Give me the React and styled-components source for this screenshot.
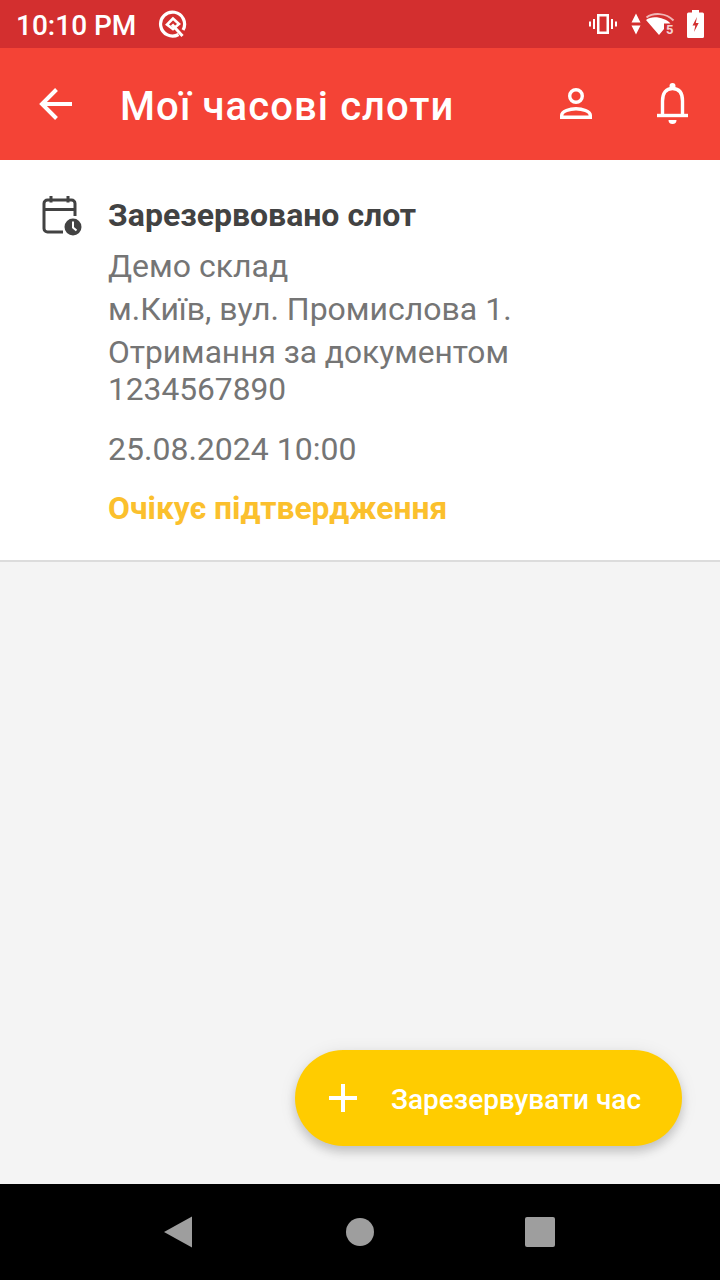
import React from "react";
import styled, { createGlobalStyle } from "styled-components";

const Global = createGlobalStyle`
  html, body { margin: 0; padding: 0; background: #f4f4f4; }
  body { font-family: Roboto, "Noto Sans", sans-serif; }
  * { box-sizing: border-box; }
`;
const Screen = styled.div`
  width: 720px; height: 1280px; display: flex; flex-direction: column; overflow: hidden; background: #f4f4f4;
`;
const StatusBar = styled.div`
  height: 48px; flex: none; background: #d32f2f; color: #fff; display: flex; align-items: center; padding: 0 16px;
`;
const Time = styled.span`
  font-size: 28px; font-weight: 500; line-height: 48px; margin-right: 22px; padding-top: 3px;
`;
const StatusRight = styled.div`
  margin-left: auto; display: flex; align-items: center;
`;
const StatusIcon = styled.svg`
  display: block; flex: none; margin-left: ${p => p.$gap || 0}px;
`;
const AppBar = styled.header`
  height: 112px; flex: none; background: #f44336; color: #fff; display: flex; align-items: center; padding: 0 28px 0 36px;
`;
const Title = styled.h1`
  margin: 0 0 0 44px; padding-top: 4px; font-size: 40px; font-weight: 500; letter-spacing: 1.1px; flex: 1; white-space: nowrap;
`;
const BarIcon = styled.svg`
  display: block; flex: none; margin-left: ${p => p.$gap || 0}px;
`;
const Main = styled.main`
  flex: 1; position: relative; min-height: 0;
`;
const Card = styled.article`
  background: #fff; border-bottom: 2px solid #dcdcdc; height: 402px; display: flex; padding: 34px 0 0 41px;
`;
const CardIcon = styled.svg`
  display: block; flex: none; margin-right: 25px;
`;
const CardBody = styled.div`
  display: flex; flex-direction: column; color: #757575;
`;
const CardTitle = styled.div`
  font-size: 32px; font-weight: 700; line-height: 42px; color: #424242;
`;
const Line = styled.div`
  font-size: 32px; line-height: 43px; margin-top: ${p => p.$mt || 0}px;
`;
const Doc = styled.div`
  font-size: 31.7px; line-height: 37px; margin-top: 3px; width: 440px;
`;
const Status = styled.div`
  font-size: 31.8px; font-weight: 700; line-height: 40px; color: #fbc02d; margin-top: 17px;
`;
const Fab = styled.button`
  position: absolute; left: 295px; top: 890px; width: 387px; height: 96px; border: 0; border-radius: 48px;
  background: #ffcc00; color: #fff; display: flex; align-items: center; padding: 0 0 0 32px;
  box-shadow: 0 6px 10px rgba(0,0,0,.16), 0 2px 18px rgba(0,0,0,.08);
  font-family: Roboto, sans-serif; font-size: 28px; font-weight: 500;
`;
const FabLabel = styled.span`
  margin-left: 32px; padding-top: 2px; white-space: nowrap;
`;
const FabIcon = styled.svg`
  display: block; flex: none;
`;
const NavBar = styled.nav`
  height: 96px; flex: none; background: #000; display: flex; align-items: center; padding-left: 160px;
`;
const NavBack = styled.svg`
  display: block; flex: none;
`;
const NavHome = styled.div`
  width: 28px; height: 28px; border-radius: 50%; background: #9e9e9e; margin-left: 150px;
`;
const NavRecent = styled.div`
  width: 30px; height: 30px; border-radius: 2px; background: #9e9e9e; margin-left: 151px;
`;

export default function App() {
  return (
    <Screen>
      <Global />
      <StatusBar>
        <Time>10:10 PM</Time>
        <StatusIcon width="30" height="30" viewBox="0 0 30 30" fill="none" stroke="#fff">
          <path d="M20.500 25.500A12 12 0 1 1 25 21" strokeWidth="3.200" />
          <path d="M15 9.500 L9 15.500 L15 20 L21 15 Z" strokeWidth="2.600" />
          <path d="M14 15.500 L24.500 27" strokeWidth="3" />
        </StatusIcon>
        <StatusRight>
          <StatusIcon width="28" height="24" viewBox="0 0 28 24" fill="#fff">
            <path fillRule="evenodd" d="M8 2h12v20H8zM10.500 4.500v15h7v-15z" />
            <path d="M4 7h2v10H4zM22 7h2v10h-2zM0 9.500h2v5H0zM26 9.500h2v5h-2z" />
          </StatusIcon>
          <StatusIcon $gap={14} width="10" height="24" viewBox="0 0 10 24" fill="#fff">
            <path d="M5 1.500l4.500 9h-9zM5 22.500l-4.500-9h9z" />
          </StatusIcon>
          <StatusIcon $gap={2} width="32" height="32" viewBox="0 -4 32 32" fill="#fff">
            <path d="M3 8 L16 23 L21 17 V11.500 H27.500 C22 5.500 9 3 3 8Z" />
            <path d="M3.500 5.500C10 .5 23 .5 30.500 8.500" fill="none" stroke="#fff" strokeOpacity=".65" strokeWidth="2" />
            <text x="23" y="21.500" fontSize="13" fontWeight="700" fontFamily="Roboto" fillOpacity=".8">5</text>
          </StatusIcon>
          <StatusIcon $gap={12} width="17" height="28" viewBox="0 0 17 28" fill="#fff">
            <path d="M5 0h7v2.500h3.500a1.500 1.500 0 0 1 1.500 1.500v22.500a1.500 1.500 0 0 1-1.500 1.500h-14A1.500 1.500 0 0 1 0 26.500V4a1.500 1.500 0 0 1 1.500-1.500H5z" />
            <path d="M10 7 L5.500 15.500h2.800L7 22 L11.700 13H8.800z" fill="#d32f2f" />
          </StatusIcon>
        </StatusRight>
      </StatusBar>
      <AppBar>
        <BarIcon width="40" height="40" viewBox="0 0 40 40" fill="none" stroke="#fff" strokeWidth="4">
          <path d="M36 20H6M20.500 5.500 6 20l14.500 14.500" />
        </BarIcon>
        <Title>Мої часові слоти</Title>
        <BarIcon width="40" height="40" viewBox="0 0 40 40" fill="none" stroke="#fff" strokeWidth="3.400">
          <circle cx="20" cy="12" r="6.300" />
          <path d="M5.700 33.300v-2c0-4 8-6.600 14.300-6.600s14.300 2.600 14.300 6.600v2z" />
        </BarIcon>
        <BarIcon $gap={56} width="40" height="44" viewBox="0 0 40 44" fill="none" stroke="#fff" strokeWidth="3.400">
          <path d="M10.500 33V19C10.500 11 14 6.500 20.500 6.500S30.500 11 30.500 19V33" />
          <path d="M5 33.500h31" />
          <circle cx="20.500" cy="4" r="3" fill="#fff" stroke="none" />
          <path d="M16.500 38h8a4 4 0 0 1-8 0z" fill="#fff" stroke="none" />
        </BarIcon>
      </AppBar>
      <Main>
        <Card>
          <CardIcon width="42" height="44" viewBox="0 0 42 44" fill="none" stroke="#424242" strokeWidth="3">
            <path d="M22 38H6.500A3.500 3.500 0 0 1 3 34.500V9.500A3.500 3.500 0 0 1 6.500 6h24A3.500 3.500 0 0 1 34 9.500V22" />
            <path d="M3 15.500h31M10 2v6.500M27 2v6.500" />
            <circle cx="32" cy="33" r="8.500" fill="#424242" stroke="none" />
            <path d="M32 27.500v6l3.500 3" stroke="#fff" strokeWidth="2" />
          </CardIcon>
          <CardBody>
            <CardTitle>Зарезервовано слот</CardTitle>
            <Line $mt={9}>Демо склад</Line>
            <Line>м.Київ, вул. Промислова 1.</Line>
            <Doc>Отримання за документом 1234567890</Doc>
            <Line $mt={20}>25.08.2024 10:00</Line>
            <Status>Очікує підтвердження</Status>
          </CardBody>
        </Card>
        <Fab>
          <FabIcon width="32" height="32" viewBox="0 0 32 32" stroke="#fff" strokeWidth="4">
            <path d="M16 2v28M2 16h28" />
          </FabIcon>
          <FabLabel>Зарезервувати час</FabLabel>
        </Fab>
      </Main>
      <NavBar>
        <NavBack width="36" height="36" viewBox="0 0 36 36" fill="#9e9e9e">
          <path d="M32 2.500V33.500L4 18 Z" />
        </NavBack>
        <NavHome />
        <NavRecent />
      </NavBar>
    </Screen>
  );
}
